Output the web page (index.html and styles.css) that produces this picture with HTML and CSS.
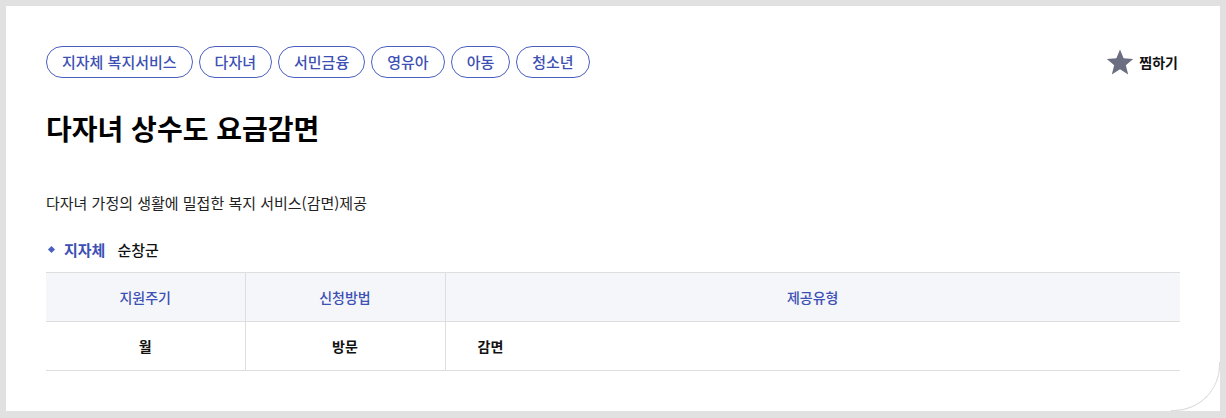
FILE: index.html
```html
<!DOCTYPE html>
<html lang="ko">
<head>
<meta charset="utf-8">
<title>다자녀 상수도 요금감면</title>
<link rel="stylesheet" href="styles.css">
</head>
<body>
<div class="page">
  <div class="card">
    <div class="top">
      <ul class="tags">
        <li class="tag">지자체 복지서비스</li>
        <li class="tag">다자녀</li>
        <li class="tag">서민금융</li>
        <li class="tag">영유아</li>
        <li class="tag">아동</li>
        <li class="tag">청소년</li>
      </ul>
      <button class="fav" type="button">
        <svg class="star" viewBox="0 0 24 24" width="28" height="28" aria-hidden="true"><path d="M12 1.2l3.1 7.6 8.2.6-6.3 5.3 2 8-7-4.4-7 4.4 2-8L.7 9.4l8.2-.6z" fill="#6b6e80"/></svg>
        <span>찜하기</span>
      </button>
    </div>
    <h1 class="title">다자녀 상수도 요금감면</h1>
    <p class="desc">다자녀 가정의 생활에 밀접한 복지 서비스(감면)제공</p>
    <div class="meta">
      <span class="bullet"></span>
      <span class="meta-label">지자체</span>
      <span class="meta-value">순창군</span>
    </div>
    <table class="info">
      <thead>
        <tr>
          <th class="c1">지원주기</th>
          <th class="c2">신청방법</th>
          <th class="c3">제공유형</th>
        </tr>
      </thead>
      <tbody>
        <tr>
          <td class="c1">월</td>
          <td class="c2">방문</td>
          <td class="c3 left">감면</td>
        </tr>
      </tbody>
    </table>
  </div>
</div>
</body>
</html>
```
FILE: styles.css
```css
* { box-sizing: border-box; }
html, body { margin: 0; padding: 0; }
body {
  background: #e1e1e1;
  font-family: "Noto Sans CJK KR", "Noto Sans", sans-serif;
  color: #111;
}
.page {
  width: 1226px;
  height: 418px;
  padding: 6px;
}
.card {
  position: relative;
  width: 1214px;
  height: 405px;
  background: #fff;
  padding: 40px 40px 0 40px;
}
.card::after {
  content: "";
  position: absolute;
  right: 0;
  bottom: 0;
  width: 48px;
  height: 48px;
  border-right: 1px solid #dcdcdc;
  border-bottom: 1px solid #dcdcdc;
  border-bottom-right-radius: 46px;
}
.top {
  display: flex;
  justify-content: space-between;
  align-items: center;
}
.tags {
  display: flex;
  gap: 6px;
  margin: 0;
  padding: 0;
  list-style: none;
}
.tag {
  height: 32px;
  line-height: 29px;
  padding: 0 15px;
  border: 1px solid #4b5fc0;
  border-radius: 16px;
  color: #3d50b4;
  font-size: 15px;
  font-weight: 500;
}
.fav {
  display: flex;
  align-items: center;
  gap: 5px;
  border: 0;
  background: none;
  padding: 0;
  font-family: inherit;
  font-size: 14px;
  font-weight: 700;
  color: #111;
  margin-right: 2px;
}
.title {
  margin: 30px 0 0;
  font-size: 28px;
  font-weight: 700;
  line-height: 40px;
  color: #000;
}
.desc {
  margin: 44px 0 0;
  font-size: 15px;
  line-height: 22px;
  color: #222;
}
.meta {
  display: flex;
  align-items: center;
  margin-top: 24px;
  height: 22px;
  font-size: 15px;
  font-weight: 700;
}
.bullet {
  width: 5px;
  height: 5px;
  background: #4b5fc0;
  transform: rotate(45deg);
  margin: 0 10px 0 3px;
}
.meta-label { color: #3d50b4; margin-right: 12px; }
.meta-value { color: #111; font-weight: 500; }
.info {
  width: 1134px;
  margin-top: 12px;
  border-collapse: collapse;
  font-size: 14px;
}
.info th, .info td {
  height: 49px;
  border-top: 1px solid #dedede;
  border-bottom: 1px solid #dedede;
  text-align: center;
  padding: 0;
}
.info th {
  background: #f4f6f9;
  color: #3d50b4;
  font-weight: 500;
}
.info td {
  color: #111;
  font-weight: 700;
}
.info .c1 { width: 199px; border-right: 1px solid #dedede; }
.info .c2 { width: 200px; border-right: 1px solid #dedede; }
.info td.left { text-align: left; padding-left: 32px; }
```
